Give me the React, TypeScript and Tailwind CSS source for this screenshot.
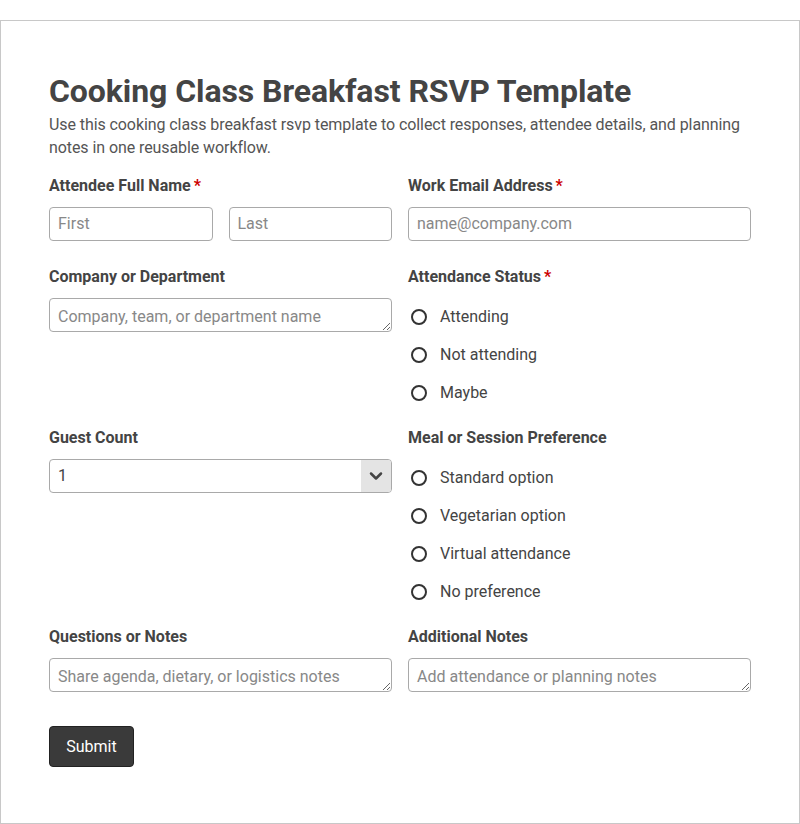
import { ChevronDown } from "lucide-react";

const inputCls =
  "block h-[34px] w-full rounded-[4px] border border-[#a9a9a9] bg-white px-[8px] pb-[2px] text-[16px] text-[#444] placeholder:text-[#888] outline-none";

const textareaCls =
  "block h-[34px] min-h-[34px] w-full resize-y rounded-[4px] border border-[#a9a9a9] bg-white px-[8px] pt-[7px] pb-[3px] text-[16px] leading-[22px] text-[#444] placeholder:text-[#888] outline-none";

function Label({ text, required }: { text: string; required?: boolean }) {
  return (
    <div className="mb-[10px] h-[22px] text-[16px] font-bold leading-[22px] text-[#444]">
      {text}
      {required ? <span className="ml-[3px] text-[#c00]">*</span> : null}
    </div>
  );
}

function RadioGroup({ name, options }: { name: string; options: string[] }) {
  return (
    <div className="flex flex-col gap-[10px] pt-[5px]">
      {options.map((opt) => (
        <label key={opt} className="flex h-[28px] items-center text-[16px] text-[#444]">
          <span className="ml-[3px] mr-[13px] box-border h-[16px] w-[16px] rounded-full border-2 border-[#333] bg-white" />
          <input type="radio" name={name} className="hidden" />
          {opt}
        </label>
      ))}
    </div>
  );
}

export default function App() {
  return (
    <div className="bg-white pt-[20px]" style={{ fontFamily: "Roboto, 'Liberation Sans', sans-serif" }}>
      <div className="h-[804px] border border-[#c8c8c8] px-[48px] pt-[50px]">
        <h1 className="text-[32px] font-bold leading-[40px] tracking-[-0.08px] text-[#444]">
          Cooking Class Breakfast RSVP Template
        </h1>
        <p className="mt-[2px] text-[16px] leading-[23px] tracking-[-0.08px] text-[#555]">
          Use this cooking class breakfast rsvp template to collect responses, attendee details, and planning
          notes in one reusable workflow.
        </p>

        <form className="mt-[16px]">
          <div className="grid grid-cols-2 gap-x-[16px]">
            <div>
              <Label text="Attendee Full Name" required />
              <div className="grid grid-cols-2 gap-x-[16px]">
                <input className={inputCls} placeholder="First" />
                <input className={inputCls} placeholder="Last" />
              </div>
            </div>
            <div>
              <Label text="Work Email Address" required />
              <input className={inputCls} placeholder="name@company.com" />
            </div>
          </div>

          <div className="mt-[25px] grid grid-cols-2 gap-x-[16px]">
            <div>
              <Label text="Company or Department" />
              <textarea className={textareaCls} rows={1} placeholder="Company, team, or department name" />
            </div>
            <div>
              <Label text="Attendance Status" required />
              <RadioGroup name="status" options={["Attending", "Not attending", "Maybe"]} />
            </div>
          </div>

          <div className="mt-[20px] grid grid-cols-2 gap-x-[16px]">
            <div>
              <Label text="Guest Count" />
              <div className="relative flex h-[34px] w-full items-center overflow-hidden rounded-[4px] border border-[#a9a9a9] bg-white">
                <span className="flex-1 px-[8px] text-[16px] text-[#444]">1</span>
                <span className="flex h-full w-[30px] items-center justify-center bg-[#e4e4e4]">
                  <ChevronDown size={20} strokeWidth={3} className="text-[#444]" />
                </span>
              </div>
            </div>
            <div>
              <Label text="Meal or Session Preference" />
              <RadioGroup
                name="meal"
                options={["Standard option", "Vegetarian option", "Virtual attendance", "No preference"]}
              />
            </div>
          </div>

          <div className="mt-[20px] grid grid-cols-2 gap-x-[16px]">
            <div>
              <Label text="Questions or Notes" />
              <textarea className={textareaCls} rows={1} placeholder="Share agenda, dietary, or logistics notes" />
            </div>
            <div>
              <Label text="Additional Notes" />
              <textarea className={textareaCls} rows={1} placeholder="Add attendance or planning notes" />
            </div>
          </div>

          <button
            type="button"
            className="mt-[34px] h-[41px] w-[85px] rounded-[4px] border border-[#222] bg-[#3a3a3a] text-[16px] text-white"
          >
            Submit
          </button>
        </form>
      </div>
    </div>
  );
}
